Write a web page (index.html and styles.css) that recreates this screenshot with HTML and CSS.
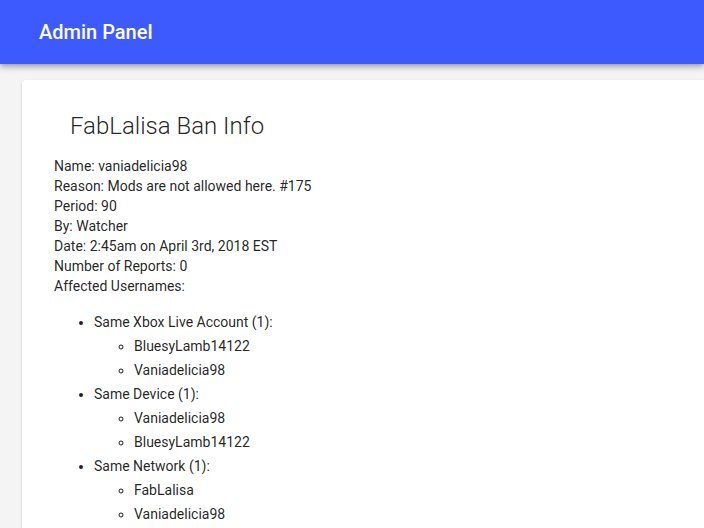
FILE: index.html
```html
<!DOCTYPE html>
<html>
<head>
<meta charset="utf-8">
<title>Admin Panel</title>
<link rel="stylesheet" href="styles.css">
</head>
<body>
<header class="toolbar">
  <span class="toolbar-title">Admin Panel</span>
</header>
<main class="content">
  <section class="card">
    <h1 class="card-title">FabLalisa Ban Info</h1>
    <div class="info">
      <div>Name: vaniadelicia98</div>
      <div>Reason: Mods are not allowed here. #175</div>
      <div>Period: 90</div>
      <div>By: Watcher</div>
      <div>Date: 2:45am on April 3rd, 2018 EST</div>
      <div>Number of Reports: 0</div>
      <div>Affected Usernames:</div>
    </div>
    <ul class="groups">
      <li>Same Xbox Live Account (1):
        <ul class="names">
          <li>BluesyLamb14122</li>
          <li>Vaniadelicia98</li>
        </ul>
      </li>
      <li>Same Device (1):
        <ul class="names">
          <li>Vaniadelicia98</li>
          <li>BluesyLamb14122</li>
        </ul>
      </li>
      <li>Same Network (1):
        <ul class="names">
          <li>FabLalisa</li>
          <li>Vaniadelicia98</li>
        </ul>
      </li>
    </ul>
  </section>
</main>
</body>
</html>
```
FILE: styles.css
```css
html, body {
  margin: 0;
  padding: 0;
}
body {
  background: #f4f4f4;
  font-family: Roboto, "Liberation Sans", sans-serif;
  color: rgba(0, 0, 0, 0.87);
  overflow: hidden;
  height: 528px;
}
.toolbar {
  height: 64px;
  background: #3d5afe;
  color: #fff;
  display: flex;
  align-items: center;
  padding-left: 39px;
  box-shadow: 0 2px 4px -1px rgba(0,0,0,.2), 0 4px 5px 0 rgba(0,0,0,.14), 0 1px 10px 0 rgba(0,0,0,.12);
  position: relative;
  z-index: 1;
}
.toolbar-title {
  font-size: 20px;
  font-weight: 500;
  line-height: 32px;
  margin-top: -1px;
}
.content {
  padding: 16px 0 0 22px;
}
.card {
  background: #fff;
  border-radius: 4px 0 0 0;
  padding: 30px 32px 32px 32px;
  min-height: 600px;
  box-shadow: 0 1px 3px rgba(0,0,0,.12), 0 1px 2px rgba(0,0,0,.08);
}
.card-title {
  margin: 0 0 14px 16px;
  font-size: 24px;
  font-weight: 300;
  line-height: 32px;
}
.info {
  font-size: 14px;
  line-height: 20px;
}
.groups {
  margin: 14px 0;
  padding-left: 40px;
  font-size: 14px;
  line-height: 24px;
}
.names {
  margin: 0;
  padding-left: 40px;
  list-style-type: circle;
}
```
